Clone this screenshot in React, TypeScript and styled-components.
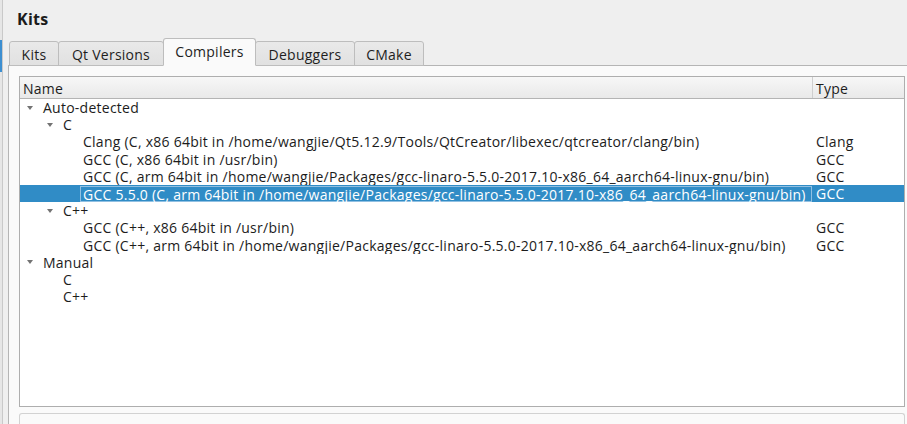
import React from "react";
import styled, { createGlobalStyle, css } from "styled-components";

const Global = createGlobalStyle`
  html, body { margin: 0; padding: 0; }
  body {
    background: #efefef;
    font-family: "Open Sans", "DejaVu Sans", sans-serif;
    font-size: 14px;
    letter-spacing: 0.25px;
    color: #1c1c1c;
    overflow: hidden;
  }
`;

const Page = styled.div`
  display: flex;
  width: 907px;
  height: 424px;
  overflow: hidden;
`;

const SideEdge = styled.div`
  position: relative;
  width: 2px;
  margin-right: 5px;
  border-right: 1px solid #c9c9c9;
  background: #e6e6e6;
`;

const SideAccent = styled.div`
  position: absolute;
  left: 0;
  top: 40px;
  width: 2px;
  height: 32px;
  background: #3d8fd1;
`;

const Main = styled.div`
  flex: 1;
  display: flex;
  flex-direction: column;
  min-width: 0;
`;

const Title = styled.div`
  height: 39px;
  padding-left: 9px;
  display: flex;
  align-items: center;
  font-weight: 700;
  font-size: 16px;
  letter-spacing: 0.3px;
  padding-bottom: 1px;
  box-sizing: border-box;
`;

const TabBar = styled.div`
  display: flex;
  align-items: flex-end;
  height: 27px;
  padding-left: 1px;
  position: relative;
  z-index: 1;
  margin-bottom: -1px;
`;

const Tab = styled.div<{ $w: number; $active?: boolean }>`
  width: ${(p) => p.$w}px;
  box-sizing: border-box;
  height: 25px;
  display: flex;
  align-items: center;
  justify-content: center;
  border: 1px solid #bdbdbd;
  border-radius: 3px 3px 0 0;
  background: linear-gradient(#e9e9e9, #e1e1e1);
  margin-right: -1px;
  color: #1e1e1e;
  padding-top: 1px;
  ${(p) =>
    p.$active &&
    css`
      height: 28px;
      background: #fafafa;
      border-bottom-color: #fafafa;
      position: relative;
      z-index: 2;
      padding-bottom: 3px;
    `}
`;

const Pane = styled.div`
  flex: 1;
  display: flex;
  flex-direction: column;
  gap: 6px;
  background: #fafafa;
  border-top: 1px solid #b5b5b5;
  border-left: 1px solid #b5b5b5;
  padding: 10px 2px 0 10px;
`;

const Tree = styled.div`
  height: 331px;
  box-sizing: border-box;
  border: 1px solid #aeaeae;
  background: #ffffff;
  display: flex;
  flex-direction: column;
`;

const Header = styled.div`
  display: grid;
  grid-template-columns: 792px 1fr;
  height: 22px;
  box-sizing: border-box;
  border-bottom: 1px solid #b4b4b4;
  background: linear-gradient(#f7f7f7, #e9e9e9);
`;

const HeaderCell = styled.div<{ $divider?: boolean }>`
  display: flex;
  align-items: center;
  padding-left: 3px;
  padding-top: 1px;
  ${(p) => p.$divider && css`border-left: 1px solid #cfcfcf;`}
`;

const Row = styled.div<{ $selected?: boolean }>`
  display: grid;
  grid-template-columns: 792px 1fr;
  height: 17.2px;
  line-height: 17px;
  white-space: nowrap;
  ${(p) =>
    p.$selected &&
    css`
      background: #308cc6;
      color: #ffffff;
    `}
`;

const NameCell = styled.div<{ $level: number }>`
  display: flex;
  align-items: center;
  padding-left: ${(p) => p.$level * 20 + 7}px;
  overflow: hidden;
`;

const Arrow = styled.span<{ $hidden?: boolean }>`
  width: 16px;
  height: 17px;
  flex: none;
  display: flex;
  align-items: center;
  justify-content: flex-start;
  visibility: ${(p) => (p.$hidden ? "hidden" : "visible")};
  &::before {
    content: "";
    display: block;
    width: 0;
    height: 0;
    border-left: 3.5px solid transparent;
    border-right: 3.5px solid transparent;
    border-top: 4px solid #737373;
  }
`;

const Label = styled.span<{ $focus?: boolean }>`
  flex: 1;
  box-sizing: border-box;
  ${(p) =>
    p.$focus &&
    css`
      height: 16px;
      line-height: 15px;
      border: 1px solid rgba(170, 205, 232, 0.8);
      margin-left: -3px;
      padding-left: 2px;
    `}
`;

const TypeCell = styled.div`
  padding-left: 4px;
`;

const Details = styled.div`
  flex: 1;
  border: 1px solid #d2d2d2;
  border-bottom: none;
  border-radius: 3px 3px 0 0;
  background: #fafafa;
`;

type Item = {
  level: number;
  name: string;
  type?: string;
  expandable?: boolean;
  selected?: boolean;
};

const items: Item[] = [
  { level: 0, name: "Auto-detected", expandable: true },
  { level: 1, name: "C", expandable: true },
  {
    level: 2,
    name: "Clang (C, x86 64bit in /home/wangjie/Qt5.12.9/Tools/QtCreator/libexec/qtcreator/clang/bin)",
    type: "Clang",
  },
  { level: 2, name: "GCC (C, x86 64bit in /usr/bin)", type: "GCC" },
  {
    level: 2,
    name: "GCC (C, arm 64bit in /home/wangjie/Packages/gcc-linaro-5.5.0-2017.10-x86_64_aarch64-linux-gnu/bin)",
    type: "GCC",
  },
  {
    level: 2,
    name: "GCC 5.5.0 (C, arm 64bit in /home/wangjie/Packages/gcc-linaro-5.5.0-2017.10-x86_64_aarch64-linux-gnu/bin)",
    type: "GCC",
    selected: true,
  },
  { level: 1, name: "C++", expandable: true },
  { level: 2, name: "GCC (C++, x86 64bit in /usr/bin)", type: "GCC" },
  {
    level: 2,
    name: "GCC (C++, arm 64bit in /home/wangjie/Packages/gcc-linaro-5.5.0-2017.10-x86_64_aarch64-linux-gnu/bin)",
    type: "GCC",
  },
  { level: 0, name: "Manual", expandable: true },
  { level: 1, name: "C" },
  { level: 1, name: "C++" },
];

const tabs = [
  { label: "Kits", w: 50 },
  { label: "Qt Versions", w: 106 },
  { label: "Compilers", w: 93, active: true },
  { label: "Debuggers", w: 100 },
  { label: "CMake", w: 70 },
];

export default function App() {
  return (
    <>
      <Global />
      <Page>
        <SideEdge>
          <SideAccent />
        </SideEdge>
        <Main>
          <Title>Kits</Title>
          <TabBar>
            {tabs.map((t) => (
              <Tab key={t.label} $w={t.w} $active={t.active}>
                {t.label}
              </Tab>
            ))}
          </TabBar>
          <Pane>
            <Tree>
              <Header>
                <HeaderCell>Name</HeaderCell>
                <HeaderCell $divider>Type</HeaderCell>
              </Header>
              {items.map((it, i) => (
                <Row key={i} $selected={it.selected}>
                  <NameCell $level={it.level}>
                    <Arrow $hidden={!it.expandable} />
                    <Label $focus={it.selected}>{it.name}</Label>
                  </NameCell>
                  <TypeCell>{it.type ?? ""}</TypeCell>
                </Row>
              ))}
            </Tree>
            <Details />
          </Pane>
        </Main>
      </Page>
    </>
  );
}
